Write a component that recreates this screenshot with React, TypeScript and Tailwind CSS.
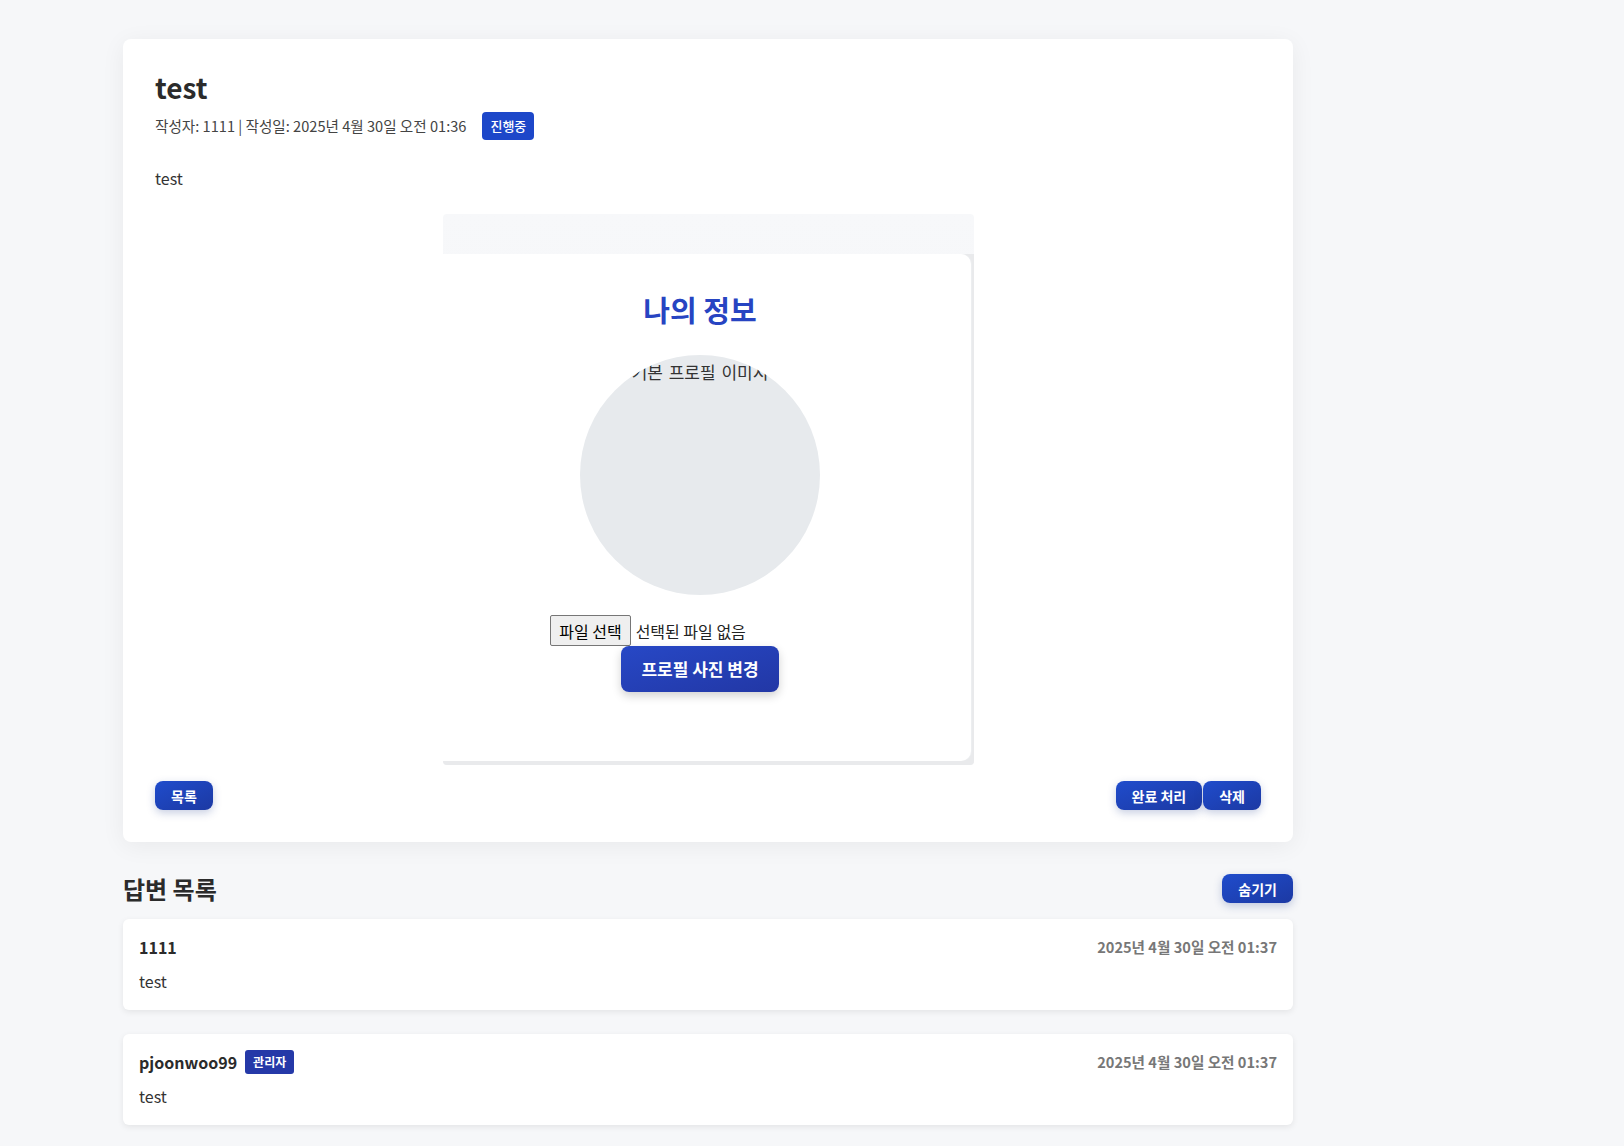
const font = { fontFamily: '"Noto Sans CJK KR", "Noto Sans", sans-serif' }

interface Answer {
    author: string
    isAdmin?: boolean
    date: string
    content: string
}

const answers: Answer[] = [
    { author: "1111", date: "2025년 4월 30일 오전 01:37", content: "test" },
    { author: "pjoonwoo99", isAdmin: true, date: "2025년 4월 30일 오전 01:37", content: "test" },
]

const btn = "h-[29px] px-4 rounded-lg bg-linear-to-br from-[#1f4ccc] to-[#1c39a3] text-white text-sm font-bold shadow-[0_3px_8px_rgba(30,58,138,0.25)] flex items-center justify-center"

// 본문에 첨부된 스크린샷 이미지
const AttachedShot: React.FC = () => {
    return (
        <div className="mx-auto w-[531px] h-[551px] rounded-[4px] overflow-hidden bg-linear-to-b from-[#f7f8fa] to-[#f2f3f5] flex flex-col">
            <div className="h-[40px] shrink-0"></div>
            <div className="flex-1 flex flex-col pr-[3px] pb-[4px] bg-[#e9eaec]">
                <div className="flex-1 bg-white rounded-r-[10px] flex flex-col items-center pr-[13px] pt-[38px] shadow-[1px_0_0_#eceef0]">
                    <p className="text-[29px] leading-[34px] font-bold text-[#2744c2]">나의 정보</p>
                    <div className="mt-[29px] w-[240px] h-[240px] rounded-full bg-[#e7eaed] overflow-hidden flex justify-center">
                        <span className="mt-[5px] text-[17px] leading-6 text-[#333] whitespace-nowrap [word-spacing:2px]">기본 프로필 이미지</span>
                    </div>
                    <div className="mt-[20px] mr-[104px] flex items-center gap-[5px] h-[31px]">
                        <span className="h-[31px] px-[8px] border border-[#767676] rounded-[2px] bg-[#efefef] text-base text-black flex items-center">파일 선택</span>
                        <span className="text-base text-[#222]">선택된 파일 없음</span>
                    </div>
                    <button className="h-[46px] px-5 rounded-lg bg-linear-to-br from-[#2748c6] to-[#2237a5] text-white text-[17px] font-bold shadow-[0_4px_10px_rgba(0,0,0,0.18)]">
                        프로필 사진 변경
                    </button>
                </div>
            </div>
        </div>
    )
}

const App: React.FC = () => {
    return (
        <div className="min-h-screen bg-[#f6f7f9] pl-[123px] pt-[39px] pb-10 text-[#333]" style={font}>
            <div className="w-[1170px]">
                <div className="bg-white rounded-lg p-8 shadow-[0_4px_24px_rgba(0,0,0,0.06)]">
                    <h1 className="text-[28px] leading-[33px] font-bold text-[#2b2b2b]">test</h1>
                    <div className="mt-2 flex items-center h-[28px]">
                        <p className="text-[14.6px] text-[#444]">작성자: 1111 | 작성일: 2025년 4월 30일 오전 01:36</p>
                        <span className="ml-4 h-[28px] px-[8px] rounded-[4px] bg-[#1d47c9] text-white text-[13px] font-medium flex items-center">진행중</span>
                    </div>
                    <p className="mt-[26px] text-base leading-6 text-[#333]">test</p>
                    <div className="mt-[24px]">
                        <AttachedShot />
                    </div>
                    <div className="mt-4 flex justify-between">
                        <button className={btn}>목록</button>
                        <div className="flex gap-px">
                            <button className={btn}>완료 처리</button>
                            <button className={btn}>삭제</button>
                        </div>
                    </div>
                </div>

                <div className="mt-8 flex justify-between items-center h-[29px]">
                    <h2 className="text-2xl font-bold text-[#2b2b2b]">답변 목록</h2>
                    <button className={btn}>숨기기</button>
                </div>

                <div className="mt-4 flex flex-col gap-6">
                    {answers.map((a, i) => (
                        <div key={i} className="bg-white rounded-md p-4 pb-[17px] shadow-[0_2px_6px_rgba(0,0,0,0.08)]">
                            <div className="flex justify-between items-center h-6">
                                <div className="flex items-center gap-2">
                                    <span className="text-base font-bold text-[#2b2b2b]">{a.author}</span>
                                    {a.isAdmin && (
                                        <span className="h-6 px-[8px] rounded-[3px] bg-[#2539a8] text-white text-xs font-bold flex items-center">관리자</span>
                                    )}
                                </div>
                                <span className="text-[14.6px] font-bold text-[#777]">{a.date}</span>
                            </div>
                            <p className="mt-[10px] text-base leading-6 text-[#333]">{a.content}</p>
                        </div>
                    ))}
                </div>
            </div>
        </div>
    )
}

export default App
